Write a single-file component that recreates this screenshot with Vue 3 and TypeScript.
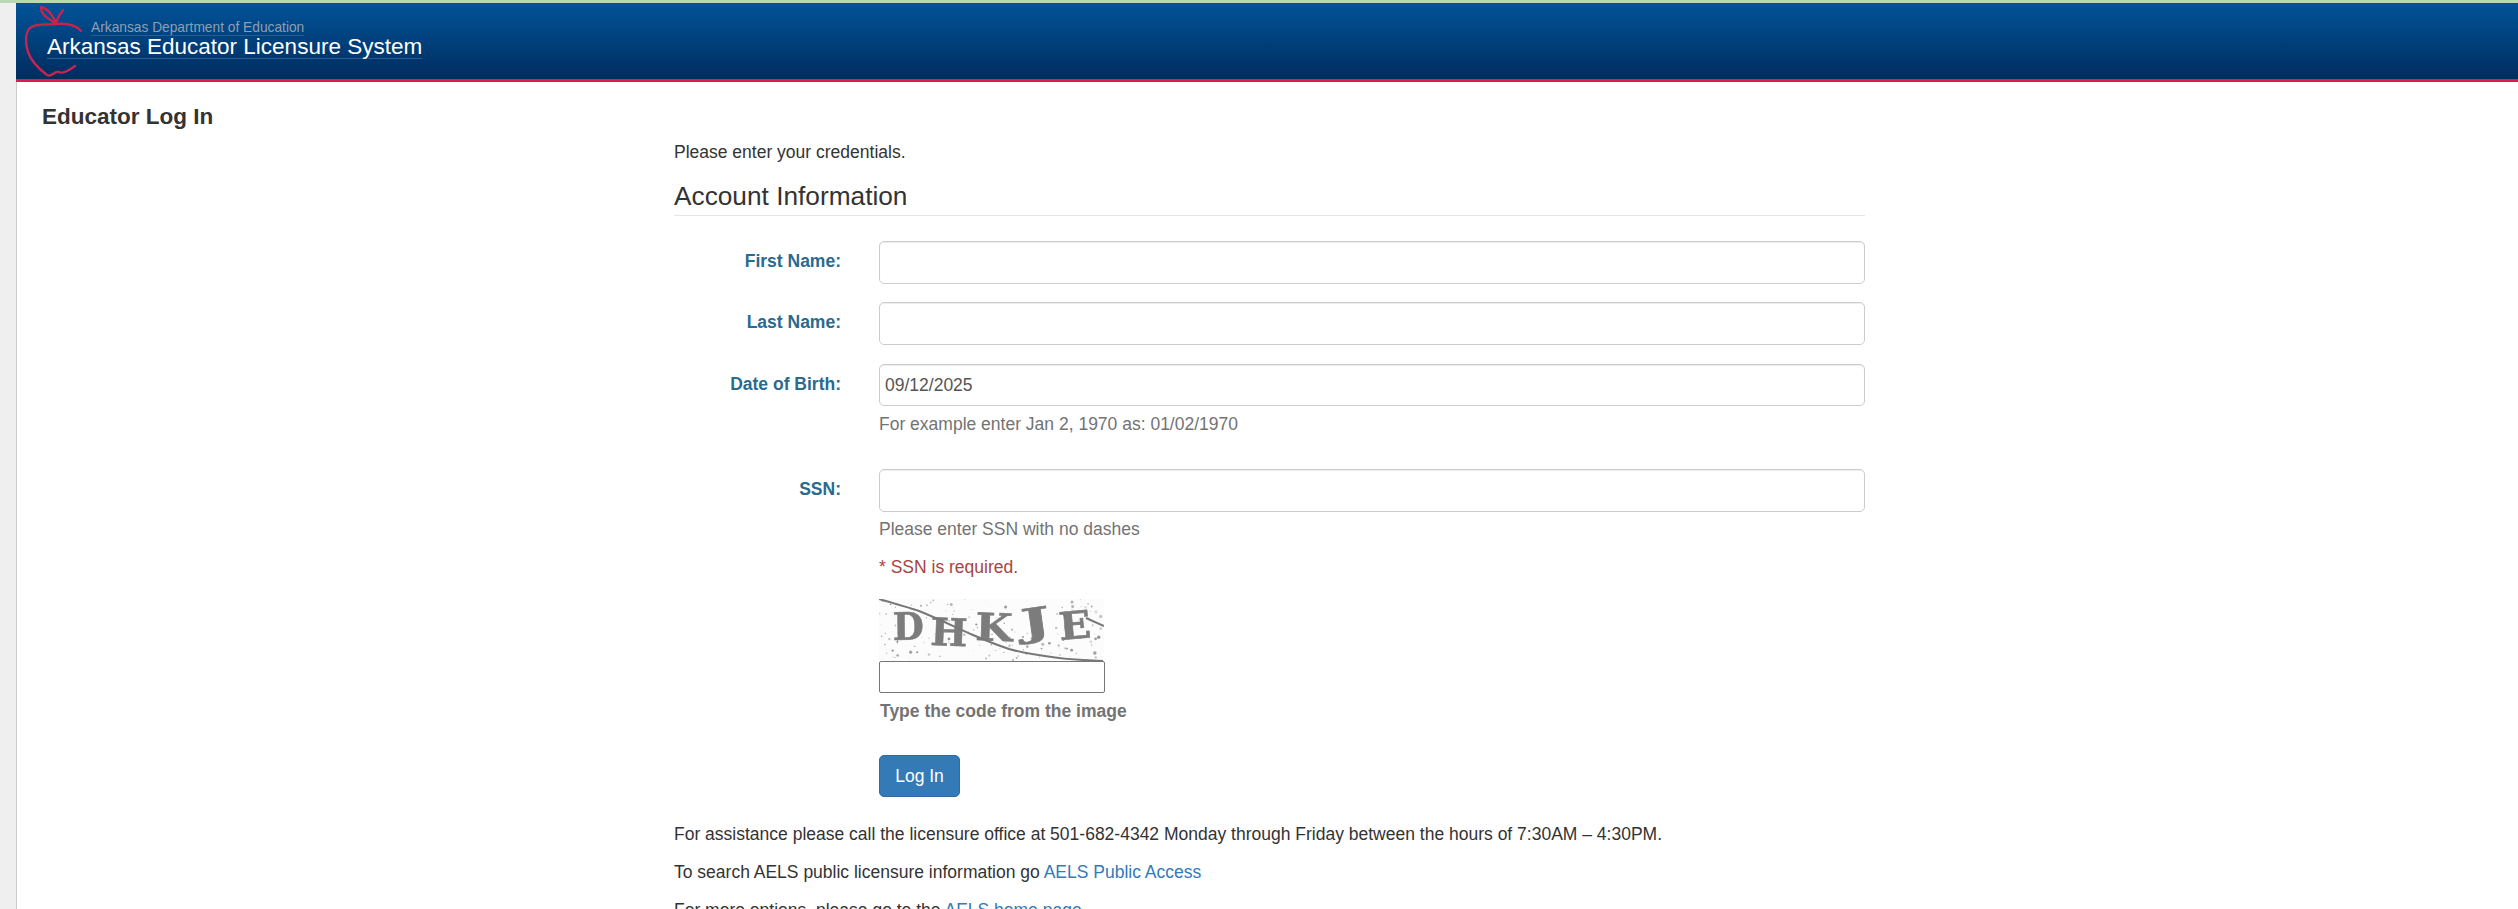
<script setup lang="ts">
interface Row {
  label: string
  value: string
  help?: string
}
const rows: Row[] = [
  { label: 'First Name:', value: '' },
  { label: 'Last Name:', value: '' },
  { label: 'Date of Birth:', value: '09/12/2025', help: 'For example enter Jan 2, 1970 as: 01/02/1970' },
]
const letters = [
  { c: 'D', x: 14, y: 41, w: 31, r: -1 },
  { c: 'H', x: 51, y: 46, w: 37, r: 2 },
  { c: 'K', x: 96, y: 41, w: 37, r: 2 },
  { c: 'J', x: 144, y: 38, w: 29, r: -8 },
  { c: 'E', x: 181, y: 41, w: 32, r: -5 },
]
let seed = 17
const rnd = () => {
  seed = (seed * 16807) % 2147483647
  return seed / 2147483647
}
const dots = Array.from({ length: 170 }, () => ({
  x: +(rnd() * 225).toFixed(1),
  y: +(rnd() * 62).toFixed(1),
  r: +(0.4 + rnd() * rnd() * 1.7).toFixed(1),
  o: +(0.2 + rnd() * 0.6).toFixed(2),
}))
</script>

<template>
  <div class="page">
    <div class="strip"></div>
    <div class="shell">
      <div class="gutter"></div>
      <div class="main">
        <header class="banner">
          <svg class="apple" viewBox="0 0 90 82" width="90" height="82" fill="none" aria-hidden="true">
            <path d="M56 24C50 19 41 16 41 7C47 8 54 16 56 24C57 18 60 14 63 10" stroke="#c8224e" stroke-width="2.4" stroke-linecap="round" stroke-linejoin="round" />
            <path d="M81 31C76 25 67 23 56 24C46 25 36 23 30 28C25 33 25 43 28 52C31 61 39 69 47 75C52 78 55 70 59 72C62 74 67 72 75 66" stroke="#c8224e" stroke-width="2.4" stroke-linecap="round" stroke-linejoin="round" />
          </svg>
          <div class="brand">
            <span class="org">Arkansas Department of Education</span>
            <span class="title">Arkansas Educator Licensure System</span>
          </div>
        </header>
        <h1 class="heading">Educator Log In</h1>
        <section class="content">
          <p class="intro">Please enter your credentials.</p>
          <h2 class="legend">Account Information</h2>
          <form class="form" @submit.prevent>
            <div v-for="r in rows" :key="r.label" class="row">
              <label class="label">{{ r.label }}</label>
              <div class="field">
                <input class="control" type="text" :value="r.value" />
                <p v-if="r.help" class="help">{{ r.help }}</p>
              </div>
            </div>
            <div class="row ssn">
              <label class="label">SSN:</label>
              <div class="field">
                <input class="control" type="text" />
                <p class="help">Please enter SSN with no dashes</p>
                <p class="error">* SSN is required.</p>
                <svg class="captcha" viewBox="0 0 225 62" width="225" height="62" role="img" aria-label="captcha">
                  <rect width="225" height="62" fill="#fcfcfc" />
                  <circle v-for="(d, i) in dots" :key="i" :cx="d.x" :cy="d.y" :r="d.r" fill="#777" :opacity="d.o" />
                  <text
                    v-for="l in letters"
                    :key="l.c"
                    class="glyph"
                    :x="l.x"
                    :y="l.y"
                    :textLength="l.w"
                    lengthAdjust="spacingAndGlyphs"
                    :transform="`rotate(${l.r} ${l.x} ${l.y})`"
                  >{{ l.c }}</text>
                  <path d="M0 0C14 4 28 8 40 12C60 20 78 29 94 36C108 42 118 46 130 50C148 55 165 57 180 59C195 61 210 61 224 62" stroke="#777" stroke-width="2" fill="none" />
                  <path d="M207 19L225 27" stroke="#777" stroke-width="2" fill="none" />
                </svg>
                <input class="code" type="text" />
                <p class="code-label">Type the code from the image</p>
                <button class="submit" type="submit">Log In</button>
              </div>
            </div>
          </form>
          <p class="note first">For assistance please call the licensure office at 501-682-4342 Monday through Friday between the hours of 7:30AM – 4:30PM.</p>
          <p class="note">To search AELS public licensure information go <a href="#">AELS Public Access</a></p>
          <p class="note">For more options, please go to the <a href="#">AELS home page</a></p>
        </section>
      </div>
    </div>
  </div>
</template>

<style>
html, body { margin: 0; height: 909px; overflow: hidden; background: #fff; }
</style>

<style scoped>
.page {
  height: 909px;
  overflow: hidden;
  font-family: "Liberation Sans", Arial, sans-serif;
  font-size: 17.5px;
  color: #333;
}
.strip { height: 3px; background: #b9d9b5; }
.shell { display: flex; height: 906px; }
.gutter { width: 16px; flex: none; background: #efefef; }
.main { flex: 1; min-width: 0; border-left: 1px solid #ccc; }
.banner {
  display: flex;
  height: 76px;
  margin-left: -1px;
  padding-left: 31px;
  position: relative;
  background: linear-gradient(#005499, #002c5e);
  border-bottom: 3px solid #e3184f;
}
.apple { position: absolute; left: -16px; top: -3px; }
.brand { display: flex; flex-direction: column; align-items: flex-start; padding-top: 18px; position: relative; }
.org {
  margin-left: 44px;
  font-size: 13.75px;
  line-height: 14px;
  color: #8f9fb3;
  border-bottom: 1px solid #2b5c8f;
}
.title {
  font-size: 22.5px;
  line-height: 22px;
  color: #fff;
  border-bottom: 1px solid #2b5c8f;
}
.heading {
  margin: 22px 0 0 25px;
  font-size: 22.5px;
  line-height: 26px;
  font-weight: 700;
}
.content { width: 1191px; margin: 0 0 0 657px; }
.intro { margin: 0; padding-top: 10px; line-height: 24px; }
.legend {
  margin: 18px 0 25px;
  padding-bottom: 5px;
  font-size: 26.25px;
  font-weight: 400;
  line-height: 28px;
  border-bottom: 1px solid #e5e5e5;
}
.row { display: flex; margin-bottom: 18.9px; }
.ssn { margin-top: 33.7px; margin-bottom: 0; }
.label {
  width: 167px;
  flex: none;
  text-align: right;
  font-weight: 700;
  color: #2b6a8f;
  line-height: 41px;
}
.field { margin-left: 38px; flex: 1; min-width: 0; }
.control {
  display: block;
  box-sizing: border-box;
  width: 100%;
  height: 42.5px;
  padding: 0 5px;
  font: inherit;
  color: #555;
  background: #fff;
  border: 1px solid #ccc;
  border-radius: 5px;
  outline: none;
  box-shadow: inset 0 1px 1px rgba(0, 0, 0, 0.075);
}
.help { margin: 5.5px 0 0; line-height: 24px; color: #737373; }
.error { margin: 14px 0 0; line-height: 24px; color: #a94442; }
.captcha { display: block; margin: 20px 0 0; filter: blur(0.4px); }
.glyph {
  font-family: "DejaVu Serif", serif;
  font-weight: 700;
  font-size: 38px;
  fill: #7c7c7c;
  stroke: #7c7c7c;
  stroke-width: 0.6px;
}
.code {
  display: block;
  box-sizing: border-box;
  width: 226px;
  height: 32px;
  padding: 0 2px;
  font: inherit;
  background: #fff;
  border: 1px solid #767676;
  border-radius: 2px;
  outline: none;
}
.code-label { margin: 6px 0 0 1px; line-height: 24px; font-weight: 700; color: #737373; }
.submit {
  display: block;
  box-sizing: border-box;
  width: 81px;
  height: 42px;
  margin-top: 32px;
  padding: 0;
  font: inherit;
  color: #fff;
  background: #337ab7;
  border: 1px solid #2e6da4;
  border-radius: 5px;
}
.note { margin: 0; padding-top: 14px; line-height: 24px; }
.note.first { padding-top: 25px; }
a { color: #337ab7; text-decoration: none; }
</style>
